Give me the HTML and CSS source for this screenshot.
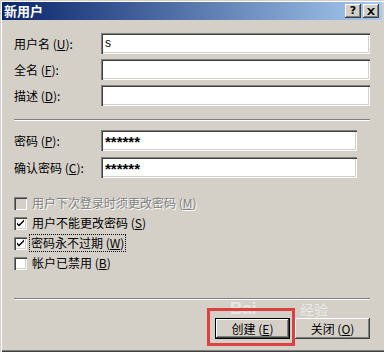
FILE: index.html
```html
<!DOCTYPE html>
<html>
<head>
<meta charset="utf-8">
<link rel="stylesheet" href="styles.css">
</head>
<body>
<div class="window">
  <div class="titlebar">
    <span class="title">新用户</span>
    <div class="tbtns">
      <span class="tbtn help">?</span>
      <span class="tbtn close"><svg width="8" height="7" viewBox="0 0 8 7"><path d="M0 0h2l2 2 2-2h2L5 3.5 8 7H6L4 5 2 7H0l3-3.5z" fill="#000"/></svg></span>
    </div>
  </div>
  <div class="content">
    <div class="fields top">
      <label class="lab">用户名 (<u>U</u>):</label><div class="input">s</div>
      <label class="lab">全名 (<u>F</u>):</label><div class="input"></div>
      <label class="lab">描述 (<u>D</u>):</label><div class="input"></div>
    </div>
    <div class="sep sep1"></div>
    <div class="fields pw">
      <label class="lab">密码 (<u>P</u>):</label><div class="input stars">******</div>
      <label class="lab">确认密码 (<u>C</u>):</label><div class="input stars">******</div>
    </div>
    <div class="checks">
      <div class="check disabled"><span class="box"></span><span class="ctext">用户下次登录时须更改密码 (<u>M</u>)</span></div>
      <div class="check"><span class="box"><svg width="9" height="9" viewBox="0 0 9 9"><path d="M1 3.5l2 2 5-5v2l-5 5-2-2z" fill="#000"/></svg></span><span class="ctext">用户不能更改密码 (<u>S</u>)</span></div>
      <div class="check"><span class="box"><svg width="9" height="9" viewBox="0 0 9 9"><path d="M1 3.5l2 2 5-5v2l-5 5-2-2z" fill="#000"/></svg></span><span class="ctext focus">密码永不过期 (<u>W</u>)</span></div>
      <div class="check"><span class="box"></span><span class="ctext">帐户已禁用 (<u>B</u>)</span></div>
    </div>
    <div class="sep sep2"></div>
    <div class="buttons">
      <button class="btn default">创建 (<u>E</u>)</button>
      <button class="btn">关闭 (<u>O</u>)</button>
    </div>
  </div>
  <div class="wm"><span class="wm-big">Bai</span><span class="wm-cn">经验</span></div>
  <div class="annot"></div>
</div>
</body>
</html>
```

FILE: styles.css
```css
html, body {
  margin: 0;
  padding: 0;
  background: #d4d0c8;
  overflow: hidden;
}
body {
  font-family: "Noto Sans CJK SC", "Liberation Sans", sans-serif;
  font-size: 12px;
  color: #000;
}
.window {
  position: relative;
  width: 392px;
  height: 352px;
  box-sizing: border-box;
  padding: 2px 0 0 2px;
  box-shadow: inset 1px 1px #d4d0c8, inset 2px 2px #fff, inset -1px -1px #404040, inset -2px -2px #808080;
}
.titlebar {
  width: 380px;
  height: 18px;
  box-sizing: border-box;
  padding: 0 3px 0 2px;
  background: linear-gradient(to right, #0a246a, #a6caf0);
  display: flex;
  align-items: center;
  justify-content: space-between;
}
.title {
  color: #fff;
  font-weight: bold;
  font-size: 13px;
  line-height: 18px;
}
.tbtns {
  display: flex;
  gap: 2px;
}
.tbtn {
  width: 16px;
  height: 14px;
  box-sizing: border-box;
  background: #d4d0c8;
  box-shadow: inset -1px -1px #404040, inset 1px 1px #fff, inset -2px -2px #808080;
  display: flex;
  align-items: center;
  justify-content: center;
  font-family: "DejaVu Sans", sans-serif;
  font-weight: bold;
  font-size: 11px;
  line-height: 14px;
}
.content {
  padding: 13px 0 0 12px;
}
.fields {
  display: grid;
  align-items: center;
}
.fields.top {
  grid-template-columns: 87px 269px;
  row-gap: 5px;
}
.fields.pw {
  grid-template-columns: 87px 256px;
  row-gap: 6px;
  margin-top: 9px;
}
.lab {
  white-space: nowrap;
  line-height: 21px;
}
.input {
  height: 21px;
  box-sizing: border-box;
  background: #fff;
  box-shadow: inset 1px 1px #808080, inset 2px 2px #404040, inset -1px -1px #fff, inset -2px -2px #d4d0c8;
  padding: 0 4px;
  line-height: 20px;
  font-family: "Liberation Sans", sans-serif;
  font-size: 12px;
}
.input.stars {
  font-weight: bold;
  font-size: 15px;
  line-height: 24px;
}
.sep {
  width: 356px;
  height: 0;
  border-top: 1px solid #808080;
  border-bottom: 1px solid #fff;
}
.sep1 {
  margin-top: 13px;
}
.checks {
  margin-top: 15px;
  display: flex;
  flex-direction: column;
}
.check {
  height: 20px;
  display: flex;
  align-items: center;
  gap: 5px;
}
.box {
  width: 13px;
  height: 13px;
  box-sizing: border-box;
  background: #fff;
  box-shadow: inset 1px 1px #808080, inset 2px 2px #404040, inset -1px -1px #fff, inset -2px -2px #d4d0c8;
  display: flex;
  align-items: center;
  justify-content: center;
  flex: none;
}
.check.disabled .box {
  background: #d4d0c8;
}
.check.disabled .ctext {
  color: #808080;
  text-shadow: 1px 1px #fff;
}
.ctext {
  line-height: 16px;
  white-space: nowrap;
}
.focus {
  outline: 1px dotted #000;
  outline-offset: 0;
  padding: 0 1px;
  margin-left: -2px;
}
.sep2 {
  margin-top: 25px;
}
.buttons {
  width: 356px;
  margin-top: 18px;
  display: flex;
  justify-content: flex-end;
  gap: 5px;
}
.btn {
  width: 75px;
  height: 21px;
  padding: 0;
  border: none;
  background: #d4d0c8;
  font: inherit;
  color: #000;
  line-height: 19px;
  box-shadow: inset -1px -1px #404040, inset 1px 1px #fff, inset -2px -2px #808080;
}
.btn.default {
  box-shadow: inset 0 0 0 1px #000, inset -2px -2px #404040, inset 2px 2px #fff, inset -3px -3px #808080;
}
.annot {
  position: absolute;
  left: 207px;
  top: 308px;
  width: 88px;
  height: 38px;
  box-sizing: border-box;
  border: 3px solid #dc4040;
}
.wm {
  position: absolute;
  left: 230px;
  top: 300px;
  width: 110px;
  height: 18px;
  color: rgba(255, 255, 255, 0.55);
  pointer-events: none;
}
.wm-big {
  position: absolute;
  left: 0;
  top: 0;
  font-family: "Liberation Sans", sans-serif;
  font-size: 17px;
  line-height: 18px;
  font-weight: bold;
}
.wm-cn {
  position: absolute;
  left: 70px;
  top: 1px;
  font-size: 14px;
  line-height: 16px;
}
```
